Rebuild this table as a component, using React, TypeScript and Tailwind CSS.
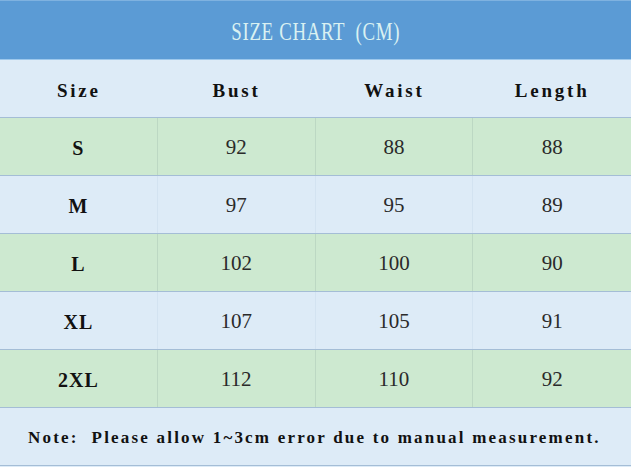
import React from "react";

const rows = [
  ["S", "92", "88", "88"],
  ["M", "97", "95", "89"],
  ["L", "102", "100", "90"],
  ["XL", "107", "105", "91"],
  ["2XL", "112", "110", "92"],
];

const serif = '"Liberation Serif", "DejaVu Serif", serif';

export default function App() {
  return (
    <div className="w-[631px] h-[467px] bg-[#ddebf7] overflow-hidden">
      <div className="h-[60px] bg-[#5b9bd5] border-t border-t-[#7fb2e0] border-b border-b-[#9dc8ec] flex items-center justify-center">
        <span
          className="text-[21px] text-[#d9f1f2] tracking-[0.7px] pt-[6px] scale-y-115 scale-x-90 whitespace-pre"
          style={{ fontFamily: serif }}
        >
          {"SIZE CHART  (CM)"}
        </span>
      </div>
      <div className="grid grid-cols-4 h-[58px] border-b border-b-[#a4bdd6] bg-[#ddebf7]">
        {["Size", "Bust", "Waist", "Length"].map((h) => (
          <div
            key={h}
            className="flex items-center justify-center pt-[6px] text-[19px] font-bold text-[#111] tracking-[2.8px]"
            style={{ fontFamily: serif }}
          >
            {h}
          </div>
        ))}
      </div>
      {rows.map((r, i) => (
        <div
          key={r[0]}
          className={`grid grid-cols-4 h-[58px] border-b border-b-[#a4bdd6] ${
            i % 2 === 0 ? "bg-[#cde9d0]" : "bg-[#ddebf7]"
          }`}
        >
          {r.map((c, j) => (
            <div
              key={j}
              className={`flex items-center justify-center pt-[3px] ${
                j < 3 ? (i % 2 === 0 ? "border-r border-r-[#bcd8c3]" : "border-r border-r-[#d3e3f1]") : ""
              } ${
                j === 0
                  ? "text-[20px] font-bold text-[#111] tracking-[1px]"
                  : "text-[21px] text-[#2a2a2a]"
              }`}
              style={{ fontFamily: serif }}
            >
              {c}
            </div>
          ))}
        </div>
      ))}
      <div
        className="h-[58px] border-b border-b-[#a4bdd6] flex items-center pl-[28px] pt-[3px] text-[17px] font-bold text-[#111] whitespace-pre tracking-[2.2px]"
        style={{ fontFamily: serif }}
      >
        {"Note:  Please allow 1~3cm error due to manual measurement."}
      </div>
    </div>
  );
}
